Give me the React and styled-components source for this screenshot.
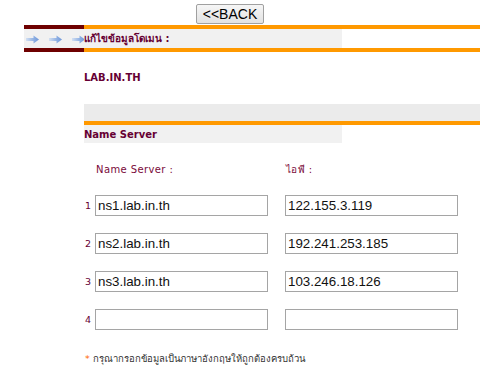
import React from "react";
import styled, { createGlobalStyle } from "styled-components";

const Global = createGlobalStyle`
  html, body { margin: 0; padding: 0; background: #fff; }
  body { font-family: "DejaVu Sans", Verdana, sans-serif; overflow: hidden; }
`;

const Page = styled.div`
  width: 480px;
  display: flex;
  flex-direction: column;
`;

const TopBar = styled.div`
  display: flex;
  padding: 4px 0 1px 196px;
`;

const BackButton = styled.button`
  height: 20px;
  width: 68px;
  padding: 0;
  font-family: "Liberation Sans", Arial, sans-serif;
  font-size: 14px;
  color: #000;
  border: 1px solid #a0a0a0;
  border-radius: 2px;
  background: linear-gradient(#f6f6f6, #e2e2e2);
  line-height: 18px;
`;

const SectionHead = styled.div`
  margin-left: 24px;
  display: grid;
  grid-template-columns: 60px 1fr;
`;

const HeadCell = styled.div`
  border-top: 4px solid ${(p) => p.$edge};
  border-bottom: 4px solid ${(p) => p.$edge};
  height: 19px;
  display: flex;
  align-items: center;
  background: ${(p) => p.$bg || "transparent"};
`;

const HeadBand = styled.div`
  width: 258px;
  height: 100%;
  background: #f1f1f1;
  display: flex;
  align-items: center;
`;

const Arrows = styled.div`
  display: flex;
  gap: 10px;
  padding-left: 2px;
  align-items: center;
  margin-top: 1px;
`;

const Title = styled.span`
  font-family: Tahoma, "DejaVu Sans", sans-serif;
  font-weight: bold;
  font-size: 10px;
  color: #660033;
  white-space: nowrap;
`;

const Content = styled.div`
  margin-left: 84px;
  display: flex;
  flex-direction: column;
`;

const Domain = styled.div`
  font-weight: bold;
  font-size: 10px;
  line-height: 12px;
  color: #660033;
  margin-top: 20px;
  height: 12px;
`;

const GrayStrip = styled.div`
  margin-top: 20px;
  height: 17px;
  background: #ebebeb;
  border-bottom: 4px solid #ff9900;
`;

const SubHead = styled.div`
  width: 258px;
  height: 18px;
  background: #f1f1f1;
  font-weight: bold;
  font-size: 10px;
  color: #660033;
  display: flex;
  align-items: center;
`;

const Form = styled.div`
  display: grid;
  grid-template-columns: 11px 173px 173px;
  margin-top: 21px;
  row-gap: 17px;
  align-items: center;
`;

const ColLabel = styled.div`
  font-size: 10px;
  line-height: 12px;
  color: #7a0a3a;
  letter-spacing: 0.4px;
  padding-left: ${(p) => p.$pad || 0}px;
  margin-bottom: 2px;
`;

const Num = styled.div`
  font-size: 9.5px;
  color: #660033;
  padding-left: 1px;
`;

const Field = styled.input`
  box-sizing: border-box;
  width: 173px;
  height: 21px;
  margin: 0;
  margin-left: ${(p) => p.$gap || 0}px;
  border: 1px solid #a5a5a5;
  padding: 0 2px;
  font-family: "Liberation Sans", Arial, sans-serif;
  font-size: 13.33px;
  color: #111;
  outline: none;
`;

const Note = styled.div`
  margin-top: 21px;
  font-size: 9.5px;
  color: #333;
  font-family: Tahoma, "DejaVu Sans", sans-serif;
  margin-left: 1px;
`;

const Star = styled.span`
  color: #ff6600;
  margin-right: 3px;
`;

const Arrow = () => (
  <svg width="13" height="9" viewBox="0 0 13 9">
    <defs>
      <linearGradient id="ag" x1="0" x2="1">
        <stop offset="0" stopColor="#d3e0f2" />
        <stop offset="0.6" stopColor="#8fb0e3" />
        <stop offset="1" stopColor="#6f97d8" />
      </linearGradient>
    </defs>
    <path d="M0 3 H7.5 V0.5 L13 4.5 L7.5 8.5 V6 H0 Z" fill="url(#ag)" />
  </svg>
);

const rows = [
  ["ns1.lab.in.th", "122.155.3.119"],
  ["ns2.lab.in.th", "192.241.253.185"],
  ["ns3.lab.in.th", "103.246.18.126"],
  ["", ""],
];

export default function App() {
  return (
    <Page>
      <Global />
      <TopBar>
        <BackButton>&lt;&lt;BACK</BackButton>
      </TopBar>
      <SectionHead>
        <HeadCell $edge="#6e0000" $bg="#f1f1f1">
          <Arrows>
            <Arrow />
            <Arrow />
            <Arrow />
          </Arrows>
        </HeadCell>
        <HeadCell $edge="#ff9900">
          <HeadBand>
            <Title>แก้ไขข้อมูลโดเมน :</Title>
          </HeadBand>
        </HeadCell>
      </SectionHead>
      <Content>
        <Domain>LAB.IN.TH</Domain>
        <GrayStrip />
        <SubHead>Name Server</SubHead>
        <Form>
          <div />
          <ColLabel $pad={1}>Name Server :</ColLabel>
          <ColLabel $pad={18}>ไอพี :</ColLabel>
          {rows.map(([ns, ip], i) => (
            <React.Fragment key={i}>
              <Num>{i + 1}</Num>
              <Field defaultValue={ns} />
              <Field defaultValue={ip} $gap={17} />
            </React.Fragment>
          ))}
        </Form>
        <Note>
          <Star>*</Star>กรุณากรอกข้อมูลเป็นภาษาอังกฤษให้ถูกต้องครบถ้วน
        </Note>
      </Content>
    </Page>
  );
}
